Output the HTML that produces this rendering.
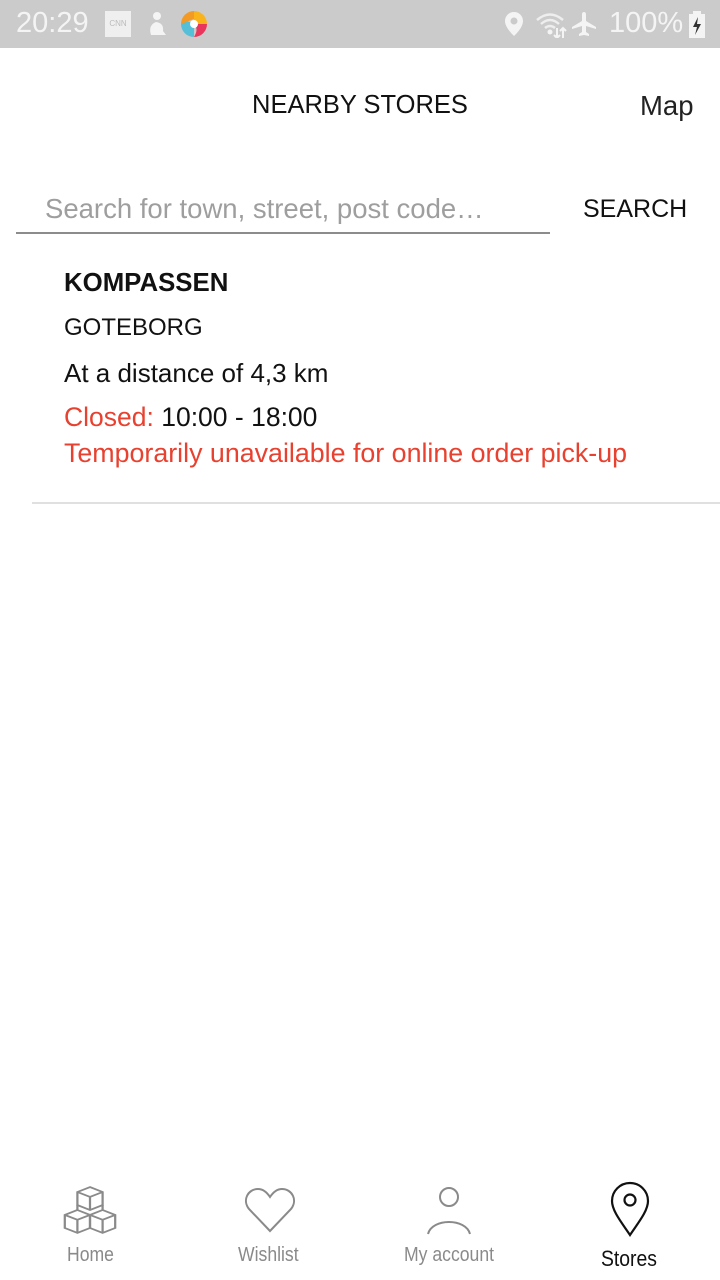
<!DOCTYPE html>
<html><head><meta charset="utf-8"><style>
*{margin:0;padding:0;box-sizing:border-box}
body{width:720px;height:1280px;position:relative;background:#fff;font-family:"Liberation Sans",sans-serif;overflow:hidden}
.a{position:absolute;white-space:nowrap;line-height:1}
.sb{position:absolute;left:0;top:0;width:720px;height:48px;background:#cbcbcb}
.red{color:#e8412f}
.lbl{font-size:20px;color:#8a8a8a;transform:scaleX(.88);transform-origin:left top}
</style></head><body>
<div class="sb">
<div class="a" style="left:16px;top:9px;font-size:29px;color:#f4f4f4">20:29</div>
<div class="a" style="left:105px;top:11px;width:26px;height:26px;background:#efefef;font-size:8px;color:#bbb;text-align:center;line-height:26px">CNN</div>
<svg class="a" style="left:146px;top:11px" width="22" height="26"><circle cx="11" cy="5" r="4" fill="#f4f4f4"/><path d="M5 24 Q2 14 10 11 Q18 12 17 20 L20 24Z" fill="#f4f4f4"/></svg>
<svg class="a" style="left:179px;top:9px" width="30" height="30"><path d="M15 2A13 13 0 0 1 28 15L15 15Z" fill="#f9b41b"/><path d="M28 15A13 13 0 0 1 15 28 Q20 20 15 15Z" fill="#e8365c"/><path d="M15 28A13 13 0 0 1 2 15 Q8 10 15 15Z" fill="#56bfd8"/><path d="M2 15A13 13 0 0 1 15 2 L15 10Z" fill="#f29a24"/><circle cx="15" cy="15" r="4" fill="#fff"/></svg>
<svg class="a" style="left:503px;top:11px" width="22" height="26"><path d="M11 1A9 9 0 0 0 2 10C2 17 11 25 11 25S20 17 20 10A9 9 0 0 0 11 1Z" fill="#f4f4f4"/><circle cx="11" cy="10" r="3.5" fill="#cbcbcb"/></svg>
<svg class="a" style="left:535px;top:12px" width="34" height="26"><path d="M2 8Q15 -3 28 8M6 12Q15 4 24 12M10 16Q15 12 20 16" stroke="#eee" stroke-width="2.5" fill="none"/><circle cx="15" cy="20" r="2.5" fill="#f4f4f4"/><path d="M22 16V26M19 23L22 26 25 23M28 26V16M25 19L28 16 31 19" stroke="#f4f4f4" stroke-width="2" fill="none"/></svg>
<svg class="a" style="left:570px;top:11px" width="28" height="26"><path d="M14 1C12 1 12 3 12 4V10L2 16V18L12 15V21L9 23V25L14 24 19 25V23L16 21V15L26 18V16L16 10V4C16 3 16 1 14 1Z" fill="#f4f4f4"/></svg>
<div class="a" style="left:609px;top:9px;font-size:29px;color:#f4f4f4">100%</div>
<svg class="a" style="left:688px;top:11px" width="18" height="28"><rect x="5" y="0" width="8" height="3" fill="#f4f4f4"/><rect x="1" y="3" width="16" height="24" fill="#f4f4f4"/><path d="M10 6L5 16H9L7 24 13 13H9Z" fill="#333"/></svg>
</div>
<div class="a" style="left:0;width:720px;text-align:center;top:93px;font-size:25.5px;color:#111">NEARBY STORES</div>
<div class="a" style="left:640px;top:92px;font-size:27.5px;color:#222">Map</div>
<div class="a" style="left:45px;top:195px;font-size:27.5px;color:#9e9e9e">Search for town, street, post code…</div>
<div class="a" style="left:16px;top:232px;width:534px;height:2px;background:#8c8c8c"></div>
<div class="a" style="left:583px;top:197px;font-size:25px;color:#111">SEARCH</div>
<div class="a" style="left:64px;top:271px;font-size:25.8px;font-weight:bold;color:#111">KOMPASSEN</div>
<div class="a" style="left:64px;top:316px;font-size:24px;color:#111">GOTEBORG</div>
<div class="a" style="left:64px;top:360px;font-size:26px;color:#111">At a distance of 4,3 km</div>
<div class="a" style="left:64px;top:404px;font-size:26.5px;color:#111"><span class="red">Closed:</span> 10:00 - 18:00</div>
<div class="a red" style="left:64px;top:440px;font-size:26.8px">Temporarily unavailable for online order pick-up</div>
<div class="a" style="left:32px;top:502px;width:688px;height:2px;background:#e0e0e0"></div>
<svg class="a" style="left:62px;top:1186px" width="56" height="48" viewBox="8 0 40 44" preserveAspectRatio="none" fill="none" stroke="#8a8a8a" stroke-width="1.6"><path d="M28 1L37 5.5V17.5L28 22 19 17.5V5.5ZM19 5.5L28 10 37 5.5M28 10V22"/><path d="M19 22L28 26.5V38.5L19 43 10 38.5V26.5ZM10 26.5L19 31 28 26.5M19 31V43"/><path d="M37 22L46 26.5V38.5L37 43 28 38.5V26.5ZM28 26.5L37 31 46 26.5M37 31V43"/><path d="M19 17.5L19 22M37 17.5L37 22"/></svg>
<svg class="a" style="left:244px;top:1187px" width="52" height="46" fill="none" stroke="#8a8a8a" stroke-width="2"><path d="M26 44L5 22C-2 13 4 2 14 2 20 2 24 7 26 10 28 7 32 2 38 2 48 2 54 13 47 22Z"/></svg>
<svg class="a" style="left:426px;top:1186px" width="46" height="50" fill="none" stroke="#8a8a8a" stroke-width="2"><circle cx="23" cy="11" r="9"/><path d="M2 48C6 32 40 32 44 48"/></svg>
<svg class="a" style="left:609px;top:1181px" width="42" height="56" fill="none" stroke="#111" stroke-width="2.2"><path d="M21 54C13 42 3 30 3 20A18 18 0 0 1 39 20C39 30 29 42 21 54Z"/><circle cx="21" cy="19" r="5.5"/></svg>
<div class="a lbl" style="left:67px;top:1245px">Home</div>
<div class="a lbl" style="left:238px;top:1245px">Wishlist</div>
<div class="a lbl" style="left:404px;top:1245px">My account</div>
<div class="a lbl" style="left:601px;top:1248px;color:#111;font-size:22px">Stores</div>
</body></html>
